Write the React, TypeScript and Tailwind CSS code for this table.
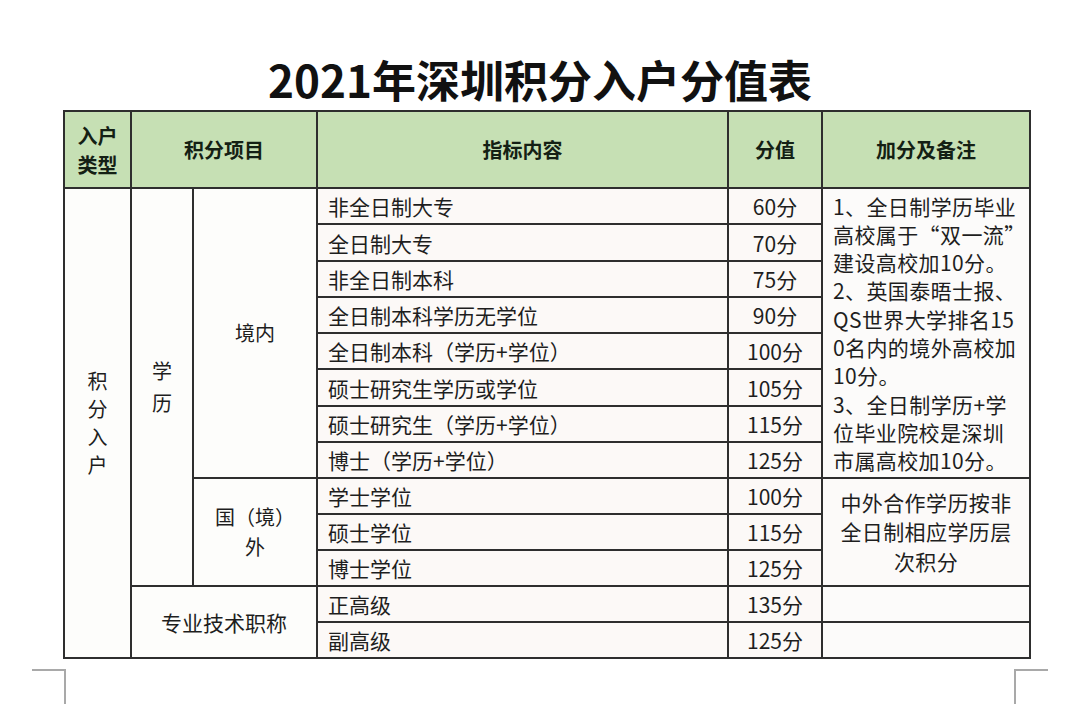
const font = { fontFamily: '"Noto Sans CJK SC", "Noto Sans", sans-serif' };

// [text, score, row height]
const domestic: [string, string, string][] = [
  ['非全日制大专', '60分', 'h-[36px]'],
  ['全日制大专', '70分', 'h-[37px]'],
  ['非全日制本科', '75分', 'h-[36px]'],
  ['全日制本科学历无学位', '90分', 'h-[36px]'],
  ['全日制本科（学历+学位）', '100分', 'h-[36px]'],
  ['硕士研究生学历或学位', '105分', 'h-[37px]'],
  ['硕士研究生（学历+学位）', '115分', 'h-[36px]'],
  ['博士（学历+学位）', '125分', 'h-[36px]'],
];

const abroad = [
  ['学士学位', '100分'],
  ['硕士学位', '115分'],
  ['博士学位', '125分'],
];

const notes = [
  '1、全日制学历毕业',
  '高校属于“双一流”',
  '建设高校加10分。',
  '2、英国泰晤士报、',
  'QS世界大学排名15',
  '0名内的境外高校加',
  '10分。',
  '3、全日制学历+学',
  '位毕业院校是深圳',
  '市属高校加10分。',
];

const cell = 'border-2 border-[#2e2e2e]';
const itemCell = `${cell} bg-[#fcf9f7] pl-[10px] text-left`;
const scoreCell = `${cell} bg-[#fcf9f7] text-center`;

export default function App() {
  return (
    <div className="w-[1080px] h-[724px] bg-white text-[#1e1e1e] overflow-hidden" style={font}>
      <h1 className="pt-[54px] h-[110px] text-center text-[44px] leading-[50px] font-bold text-[#111]">
        2021年深圳积分入户分值表
      </h1>

      <table className="ml-[63px] w-[966px] table-fixed border-collapse border-2 border-[#2e2e2e] text-[21px] leading-[28px]">
        <colgroup>
          <col className="w-[67px]" />
          <col className="w-[62px]" />
          <col className="w-[124px]" />
          <col className="w-[411px]" />
          <col className="w-[94px]" />
          <col className="w-[208px]" />
        </colgroup>
        <thead>
          <tr className="h-[77px] bg-[#c6e0b4] text-[#142014] text-[20px]">
            <th className={`${cell} font-bold leading-[29px]`}>
              入户
              <br />
              类型
            </th>
            <th colSpan={2} className={`${cell} font-bold`}>积分项目</th>
            <th className={`${cell} font-bold`}>指标内容</th>
            <th className={`${cell} font-bold`}>分值</th>
            <th className={`${cell} font-bold`}>加分及备注</th>
          </tr>
        </thead>
        <tbody>
          {domestic.map(([item, score, h], i) => (
            <tr key={item} className={h}>
              {i === 0 && (
                <>
                  <td rowSpan={13} className={`${cell} bg-[#fdfdfb] text-center text-[20px] leading-[28px]`}>
                    积<br />分<br />入<br />户
                  </td>
                  <td rowSpan={11} className={`${cell} bg-[#fdfdfb] text-center text-[20px] leading-[32px]`}>
                    学<br />历
                  </td>
                  <td rowSpan={8} className={`${cell} bg-[#fdfdfb] text-center text-[20px]`}>
                    境内
                  </td>
                </>
              )}
              <td className={itemCell}>{item}</td>
              <td className={scoreCell}>{score}</td>
              {i === 0 && (
                <td
                  rowSpan={8}
                  className={`${cell} bg-[#fcfbfa] pl-[10px] text-left leading-[28.3px] tracking-[0.4px]`}
                >
                  {notes.map((line) => (
                    <div key={line} className="whitespace-nowrap">
                      {line}
                    </div>
                  ))}
                </td>
              )}
            </tr>
          ))}
          {abroad.map(([item, score], i) => (
            <tr key={item} className="h-[36px]">
              {i === 0 && (
                <td rowSpan={3} className={`${cell} bg-[#fdfdfb] text-center text-[20px] leading-[30px]`}>
                  国（境）
                  <br />
                  外
                </td>
              )}
              <td className={itemCell}>{item}</td>
              <td className={scoreCell}>{score}</td>
              {i === 0 && (
                <td rowSpan={3} className={`${cell} bg-[#fcfaf9] text-center leading-[29.5px] tracking-[0.4px]`}>
                  中外合作学历按非
                  <br />
                  全日制相应学历层
                  <br />
                  次积分
                </td>
              )}
            </tr>
          ))}
          <tr className="h-[36px]">
            <td colSpan={2} rowSpan={2} className={`${cell} bg-[#fdfdfb] text-center`}>
              专业技术职称
            </td>
            <td className={itemCell}>正高级</td>
            <td className={scoreCell}>135分</td>
            <td className={`${cell} bg-[#fcfbfa]`} />
          </tr>
          <tr className="h-[36px]">
            <td className={itemCell}>副高级</td>
            <td className={scoreCell}>125分</td>
            <td className={`${cell} bg-[#fcfbfa]`} />
          </tr>
        </tbody>
      </table>

      {/* page corner marks */}
      <div className="mt-[10px] flex justify-between px-[32px]">
        <div className="w-[34px] h-[35px] border-t-2 border-r-2 border-[#a9a9a9]" />
        <div className="w-[34px] h-[35px] border-t-2 border-l-2 border-[#a9a9a9]" />
      </div>
    </div>
  );
}
